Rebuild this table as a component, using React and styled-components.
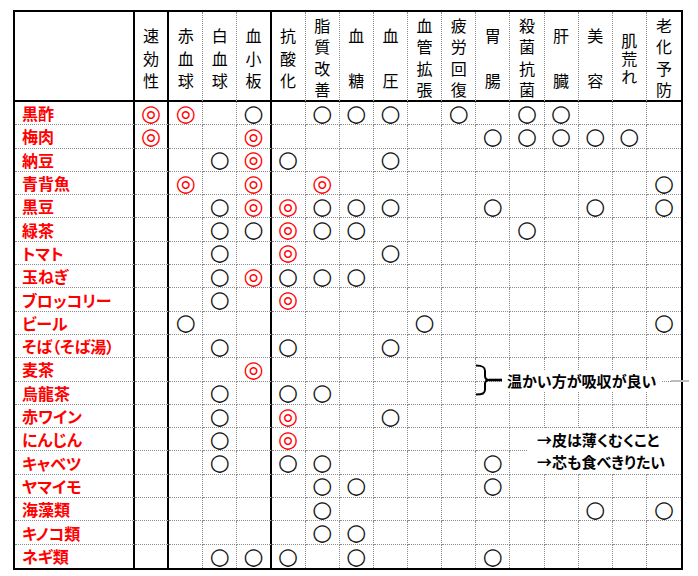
import React from 'react'
import styled, { createGlobalStyle } from 'styled-components'

const COLUMNS = [
  { title: '速効性', edge: 'thick' },
  { title: '赤血球' },
  { title: '白血球' },
  { title: '血小板', edge: 'thick' },
  { title: '抗酸化' },
  { title: '脂質改善' },
  { title: '血糖' },
  { title: '血圧' },
  { title: '血管拡張' },
  { title: '疲労回復' },
  { title: '胃腸' },
  { title: '殺菌抗菌' },
  { title: '肝臓' },
  { title: '美容' },
  { title: '肌荒れ', packed: true },
  { title: '老化予防', edge: 'none' },
]

// ◎ = 特に良い, ○ = 良い, . = 空欄
const FOODS = [
  ['黒酢', '◎◎.○.○○○.○.○○...'],
  ['梅肉', '◎..◎......○○○○○.'],
  ['納豆', '..○◎○..○........'],
  ['青背魚', '.◎.◎.◎.........○'],
  ['黒豆', '..○◎◎○○○..○..○.○'],
  ['緑茶', '..○○◎○○....○....'],
  ['トマト', '..○.◎..○........'],
  ['玉ねぎ', '..○◎○○○.........'],
  ['ブロッコリー', '..○.◎...........'],
  ['ビール', '.○......○......○'],
  ['そば（そば湯）', '..○.○..○........'],
  ['麦茶', '...◎............'],
  ['烏龍茶', '..○.○○..........'],
  ['赤ワイン', '..○.◎..○........'],
  ['にんじん', '..○.◎...........'],
  ['キャベツ', '..○.○○....○.....'],
  ['ヤマイモ', '.....○○...○.....'],
  ['海藻類', '.....○.......○.○'],
  ['キノコ類', '.....○○.........'],
  ['ネギ類', '..○○○.○...○.....'],
]

const GlobalStyle = createGlobalStyle`
  body {
    margin: 0;
    background: #fff;
    font-family: "Noto Sans CJK JP", "Noto Sans", sans-serif;
  }
`

const Page = styled.div`
  padding: 10px 0 0 13px;
`

const Sheet = styled.div`
  position: relative;
  box-sizing: border-box;
  width: 670px;
  display: grid;
  grid-template-columns: 120px repeat(16, 1fr);
  grid-template-rows: 90px repeat(20, 23.3px);
  border: 2px solid #000;
`

const edgeBorder = edge =>
  edge === 'thick' ? '2px solid #000' : edge === 'none' ? 'none' : '1px dotted #8c8c8c'

const Cell = styled.div`
  box-sizing: border-box;
  min-width: 0;
  display: flex;
  align-items: center;
  justify-content: center;
  border-right: ${p => edgeBorder(p.$edge)};
  border-bottom: ${p => (p.$last ? 'none' : '1px dotted #8c8c8c')};
`

const HeadCell = styled(Cell)`
  flex-direction: column;
  justify-content: ${p => (p.$packed ? 'center' : 'space-between')};
  padding: ${p => (p.$long ? '4px 0 2px' : '14px 0 11px')};
  border-bottom: 2px solid #000;
  font-size: 16px;
  line-height: 18px;
  color: #000;
`

const Label = styled(Cell)`
  justify-content: flex-start;
  padding-left: 7px;
  color: #f00;
  font-size: 16px;
  font-weight: 700;
  font-feature-settings: "palt";
  white-space: nowrap;
`

const Mark = styled.span`
  font-family: "DejaVu Sans", sans-serif;
  font-size: 23px;
  line-height: 1;
  font-weight: ${p => (p.$double ? 700 : 400)};
  color: ${p => (p.$double ? '#f00' : '#111')};
`

const WarmNote = styled.div`
  position: absolute;
  left: 460px;
  top: 352px;
  display: flex;
  align-items: center;
`

const NoteText = styled.span`
  background: #fff;
  padding: 0 5px 0 4px;
  font-size: 15px;
  font-weight: 700;
  line-height: 22px;
  color: #000;
  font-feature-settings: "palt";
  white-space: nowrap;
`

const Dash = styled.span`
  width: 18px;
  height: 2px;
  margin-left: 10px;
  background: #bdbdbd;
`

const PeelNote = styled.div`
  position: absolute;
  left: 513px;
  top: 416px;
  width: 153px;
  height: 45.6px;
  box-sizing: border-box;
  padding: 1px 0 0 9px;
  background: #fff;
  display: flex;
  flex-direction: column;
`

const PeelLine = styled(NoteText)`
  padding: 0;
`

const Brace = () => (
  <svg width="28" height="34" viewBox="0 0 28 34" fill="none" stroke="#000">
    <path d="M1 1.5C7.5 1.5 10 3 10 7L10 12C10 15 11.5 16 14.5 16" strokeWidth="2" />
    <path d="M14.5 16C11.5 16 10 17 10 20L10 25.5C10 29.5 7.5 30.5 1 30.5" strokeWidth="2" />
    <path d="M14 16L27 16" strokeWidth="2.6" />
  </svg>
)

const App = () => (
  <Page>
    <GlobalStyle />
    <Sheet>
      <HeadCell $edge="thick" />
      {COLUMNS.map(col => (
        <HeadCell
          key={col.title}
          $edge={col.edge}
          $packed={col.packed}
          $long={col.title.length === 4}
        >
          {[...col.title].map((ch, i) => (
            <span key={i}>{ch}</span>
          ))}
        </HeadCell>
      ))}

      {FOODS.map(([name, marks], r) => {
        const last = r === FOODS.length - 1
        return (
          <React.Fragment key={name}>
            <Label $edge="thick" $last={last}>{name}</Label>
            {COLUMNS.map((col, c) => {
              const m = marks[c]
              return (
                <Cell key={c} $edge={col.edge} $last={last}>
                  {m !== '.' && <Mark $double={m === '◎'}>{m}</Mark>}
                </Cell>
              )
            })}
          </React.Fragment>
        )
      })}

      <WarmNote>
        <Brace />
        <NoteText>温かい方が吸収が良い</NoteText>
        <Dash />
      </WarmNote>

      <PeelNote>
        <PeelLine>→皮は薄くむくこと</PeelLine>
        <PeelLine>→芯も食べきりたい</PeelLine>
      </PeelNote>
    </Sheet>
  </Page>
)

export default App
